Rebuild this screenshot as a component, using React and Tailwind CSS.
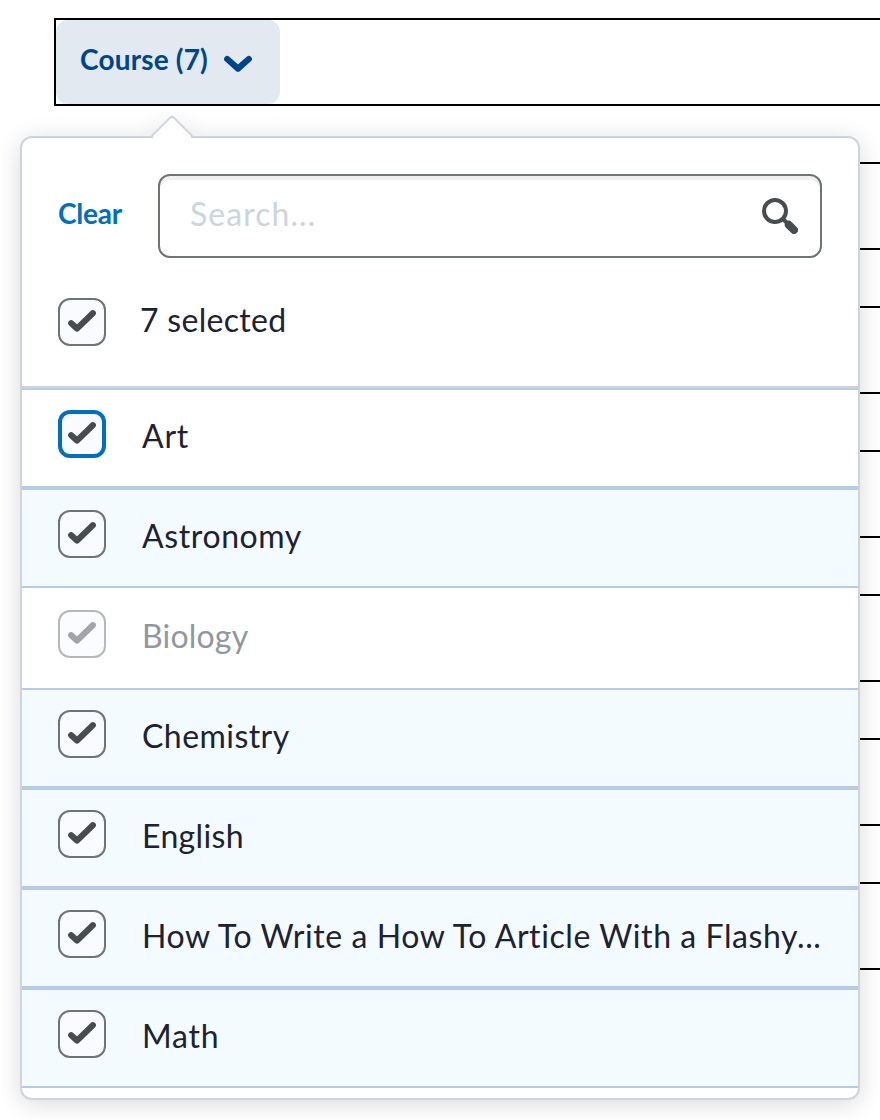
const courses = [
  { name: 'Art', focused: true, row: 'h-[100px] border-b-4 bg-white pt-5', text: 'tracking-[0.8px]' },
  { name: 'Astronomy', row: 'h-[98px] border-b-2 bg-[#f3fbff] pt-5', text: 'tracking-[0.6px]' },
  {
    name: 'Biology',
    disabled: true,
    row: 'h-[102px] border-b-2 bg-white pt-[22px]',
    text: 'tracking-[0.2px] text-[#90989d]',
  },
  { name: 'Chemistry', row: 'h-[100px] border-b-4 bg-[#f3fbff] pt-5', text: 'tracking-[0.45px]' },
  { name: 'English', row: 'h-[100px] border-b-4 bg-[#f3fbff] pt-5', text: 'tracking-[0.35px]' },
  {
    name: 'How To Write a How To Article With a Flashy...',
    row: 'h-[100px] border-b-4 bg-[#f3fbff] pt-5',
    text: 'tracking-[0.58px]',
  },
  { name: 'Math', row: 'h-[98px] border-b-2 bg-[#f3fbff] pt-5', text: 'tracking-[0.8px]' },
];

function Checkbox({ focused, disabled, label }) {
  return (
    <span
      role="checkbox"
      aria-checked="true"
      aria-label={label}
      className={`flex size-12 shrink-0 items-center justify-center rounded-xl bg-[#f9fbff] ${
        focused ? 'border-4 border-[#006fbf]' : 'border-2 border-[#6e7376]'
      } ${disabled ? 'opacity-50' : ''}`}
    >
      <svg viewBox="0 0 48 48" className="size-12 shrink-0" fill="none">
        <path
          d="M13.2 25.2 19 30.6 34.8 15.2"
          stroke="#494c4e"
          strokeWidth="6.2"
          strokeLinecap="round"
          strokeLinejoin="round"
        />
      </svg>
    </span>
  );
}

function Panel() {
  return (
    <div className="absolute top-[136px] left-5 h-[964px] w-[840px] rounded-xl border-2 border-[#cdd5dc] bg-white shadow-[0_4px_24px_rgba(0,0,0,0.15)]">
      <div className="absolute -top-[26px] left-[118px] h-[26px] w-16 overflow-hidden">
        <div className="mx-auto mt-[9px] size-8 rotate-45 rounded-[4px] border-2 border-[#cdd5dc] bg-white shadow-[-4px_-4px_24px_rgba(0,0,0,0.05)]" />
      </div>
      <div className="relative flex h-full flex-col overflow-hidden rounded-[10px]">
        <div className="h-[250px] shrink-0 border-b-2 border-[#cdd5dc] px-9 pt-9">
          <div className="flex items-center">
            <button className="-mt-1.5 w-[100px] text-left text-[28px] leading-9 font-bold tracking-[-0.2px] text-[#006fbf]">
              Clear
            </button>
            <div className="flex h-[84px] flex-1 items-center justify-between rounded-xl border-2 border-[#6e7376] pr-[22px] pl-[30px] shadow-[inset_0_4px_0_#eff0f2]">
              <span className="-mt-1 text-[32px] tracking-[1.05px] text-[#cdd5dc]">Search...</span>
              <svg viewBox="0 0 36 36" className="size-9" fill="none" stroke="#494c4e">
                <circle cx="13" cy="13" r="11" strokeWidth="4" />
                <path d="M21 21 26 26" strokeWidth="4" />
                <path d="M26.8 26.8 32 32" strokeWidth="8" strokeLinecap="round" />
              </svg>
            </div>
          </div>
          <div className="mt-10 flex">
            <Checkbox label="Select all" />
            <span className="ml-[34px] text-[32px] leading-[44px] tracking-[0.3px]">7 selected</span>
          </div>
        </div>
        <ul className="border-t-2 border-[#b5cbe8]">
          {courses.map((course) => (
            <li key={course.name} className={`flex border-[#b5cbe8] px-9 ${course.row}`}>
              <Checkbox
                label={course.name}
                focused={course.focused}
                disabled={course.disabled}
              />
              <span className={`ml-9 text-[32px] leading-[52px] whitespace-nowrap ${course.text}`}>
                {course.name}
              </span>
            </li>
          ))}
        </ul>
      </div>
    </div>
  );
}

export default function App() {
  return (
    <div className="relative h-[1120px] w-[880px] overflow-hidden bg-white font-['Lato',sans-serif] text-[#202131]">
      <div className="flex flex-col gap-14 pt-[18px] pl-[54px]">
        <div className="h-[88px] border-2 border-r-0 border-black">
          <button className="flex h-[84px] w-56 items-center rounded-xl bg-[#e3e9f1] pl-6 text-[28px] font-bold text-[#004489]">
            <span className="-mt-1.5 tracking-[0.18px]">Course (7)</span>
            <svg viewBox="0 0 28 18" className="mt-1 ml-4 h-[18px] w-7" fill="none">
              <path
                d="M3.2 4 14 13.6 24.8 4"
                stroke="#004489"
                strokeWidth="6.2"
                strokeLinecap="round"
                strokeLinejoin="round"
              />
            </svg>
          </button>
        </div>
        {[1, 2, 3, 4, 5, 6].map((n) => (
          <div key={n} className="h-[88px] border-2 border-r-0 border-black" />
        ))}
      </div>
      <Panel />
    </div>
  );
}
